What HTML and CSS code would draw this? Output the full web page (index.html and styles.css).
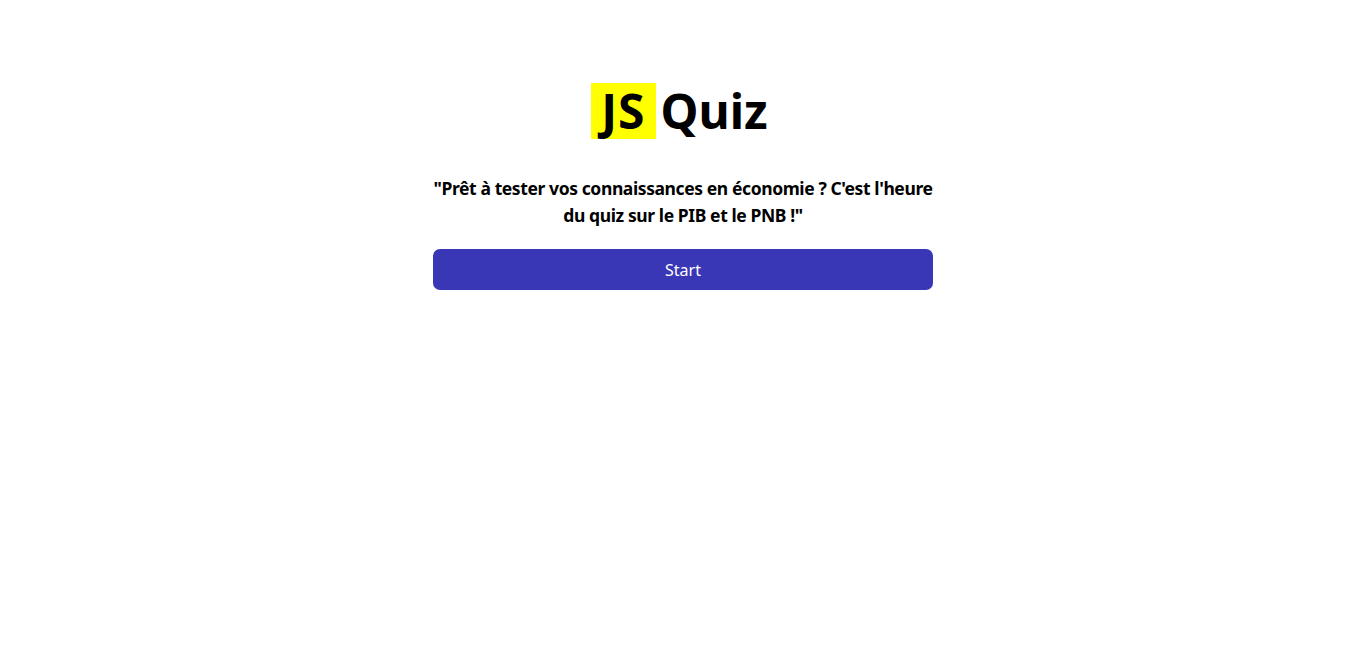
FILE: index.html
```html
<!DOCTYPE html>
<html lang="fr">
<head>
<meta charset="utf-8">
<title>JS Quiz</title>
<link rel="stylesheet" href="styles.css">
</head>
<body>
<main class="start">
  <h1 class="logo"><span class="logo-js">JS</span><span class="logo-text">Quiz</span></h1>
  <p class="intro">"Prêt à tester vos connaissances en économie ? C'est l'heure du quiz sur le PIB et le PNB !"</p>
  <button class="start-btn" type="button">Start</button>
</main>
</body>
</html>
```

FILE: styles.css
```css
html, body {
  margin: 0;
  padding: 0;
  background: #ffffff;
}
body {
  font-family: "Noto Sans", "Open Sans", sans-serif;
  color: #000;
}
.start {
  width: 500px;
  margin: 83px auto 0;
  display: flex;
  flex-direction: column;
  align-items: stretch;
}
.logo {
  margin: 0;
  padding-right: 7px;
  display: flex;
  justify-content: center;
  align-items: center;
  gap: 5px;
  font-size: 48px;
  line-height: 56px;
  height: 56px;
  font-weight: 700;
  letter-spacing: 0;
}
.logo-js {
  display: block;
  background: #ffff00;
  padding: 0 10px 0 10px;
  height: 56px;
  letter-spacing: 1px;
}
.intro {
  margin: 36px 0 20px;
  font-size: 17.5px;
  line-height: 27px;
  font-weight: 700;
  text-align: center;
  letter-spacing: -0.4px;
}
.start-btn {
  height: 41px;
  border: none;
  border-radius: 7px;
  background: #3a37b7;
  color: #ffffff;
  font-family: inherit;
  font-size: 16px;
  cursor: pointer;
}
```
